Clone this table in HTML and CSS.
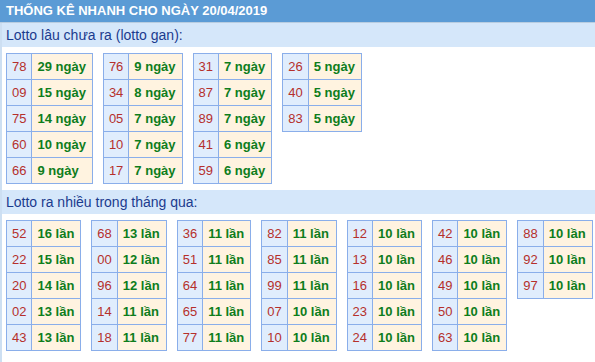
FILE: index.html
```html
<!DOCTYPE html>
<html lang="vi">
<head>
<meta charset="utf-8">
<title>Thống kê nhanh</title>
<link rel="stylesheet" href="styles.css">
</head>
<body>
<div class="header">THỐNG KÊ NHANH CHO NGÀY 20/04/2019</div>
<div class="wrap">
  <div class="subhead">Lotto lâu chưa ra (lotto gan):</div>
  <div class="tables">
    <table class="lt">
      <tr><td class="num">78</td><td class="val">29 ngày</td></tr>
      <tr><td class="num">09</td><td class="val">15 ngày</td></tr>
      <tr><td class="num">75</td><td class="val">14 ngày</td></tr>
      <tr><td class="num">60</td><td class="val">10 ngày</td></tr>
      <tr><td class="num">66</td><td class="val">9 ngày</td></tr>
    </table>
    <table class="lt">
      <tr><td class="num">76</td><td class="val">9 ngày</td></tr>
      <tr><td class="num">34</td><td class="val">8 ngày</td></tr>
      <tr><td class="num">05</td><td class="val">7 ngày</td></tr>
      <tr><td class="num">10</td><td class="val">7 ngày</td></tr>
      <tr><td class="num">17</td><td class="val">7 ngày</td></tr>
    </table>
    <table class="lt">
      <tr><td class="num">31</td><td class="val">7 ngày</td></tr>
      <tr><td class="num">87</td><td class="val">7 ngày</td></tr>
      <tr><td class="num">89</td><td class="val">7 ngày</td></tr>
      <tr><td class="num">41</td><td class="val">6 ngày</td></tr>
      <tr><td class="num">59</td><td class="val">6 ngày</td></tr>
    </table>
    <table class="lt">
      <tr><td class="num">26</td><td class="val">5 ngày</td></tr>
      <tr><td class="num">40</td><td class="val">5 ngày</td></tr>
      <tr><td class="num">83</td><td class="val">5 ngày</td></tr>
    </table>
  </div>
  <div class="subhead">Lotto ra nhiều trong tháng qua:</div>
  <div class="tables">
    <table class="lt">
      <tr><td class="num">52</td><td class="val">16 lần</td></tr>
      <tr><td class="num">22</td><td class="val">15 lần</td></tr>
      <tr><td class="num">20</td><td class="val">14 lần</td></tr>
      <tr><td class="num">02</td><td class="val">13 lần</td></tr>
      <tr><td class="num">43</td><td class="val">13 lần</td></tr>
    </table>
    <table class="lt">
      <tr><td class="num">68</td><td class="val">13 lần</td></tr>
      <tr><td class="num">00</td><td class="val">12 lần</td></tr>
      <tr><td class="num">96</td><td class="val">12 lần</td></tr>
      <tr><td class="num">14</td><td class="val">11 lần</td></tr>
      <tr><td class="num">18</td><td class="val">11 lần</td></tr>
    </table>
    <table class="lt">
      <tr><td class="num">36</td><td class="val">11 lần</td></tr>
      <tr><td class="num">51</td><td class="val">11 lần</td></tr>
      <tr><td class="num">64</td><td class="val">11 lần</td></tr>
      <tr><td class="num">65</td><td class="val">11 lần</td></tr>
      <tr><td class="num">77</td><td class="val">11 lần</td></tr>
    </table>
    <table class="lt">
      <tr><td class="num">82</td><td class="val">11 lần</td></tr>
      <tr><td class="num">85</td><td class="val">11 lần</td></tr>
      <tr><td class="num">99</td><td class="val">11 lần</td></tr>
      <tr><td class="num">07</td><td class="val">10 lần</td></tr>
      <tr><td class="num">10</td><td class="val">10 lần</td></tr>
    </table>
    <table class="lt">
      <tr><td class="num">12</td><td class="val">10 lần</td></tr>
      <tr><td class="num">13</td><td class="val">10 lần</td></tr>
      <tr><td class="num">16</td><td class="val">10 lần</td></tr>
      <tr><td class="num">23</td><td class="val">10 lần</td></tr>
      <tr><td class="num">24</td><td class="val">10 lần</td></tr>
    </table>
    <table class="lt">
      <tr><td class="num">42</td><td class="val">10 lần</td></tr>
      <tr><td class="num">46</td><td class="val">10 lần</td></tr>
      <tr><td class="num">49</td><td class="val">10 lần</td></tr>
      <tr><td class="num">50</td><td class="val">10 lần</td></tr>
      <tr><td class="num">63</td><td class="val">10 lần</td></tr>
    </table>
    <table class="lt">
      <tr><td class="num">88</td><td class="val">10 lần</td></tr>
      <tr><td class="num">92</td><td class="val">10 lần</td></tr>
      <tr><td class="num">97</td><td class="val">10 lần</td></tr>
    </table>
  </div>
</div>
</body>
</html>
```
FILE: styles.css
```css
html, body {
  margin: 0;
  padding: 0;
  background: #ffffff;
  font-family: "Liberation Sans", Arial, sans-serif;
}

.header {
  height: 22px;
  line-height: 22px;
  padding-left: 6px;
  background: #5b9bd5;
  color: #ffffff;
  font-size: 13px;
  font-weight: bold;
  border-bottom: 1px solid #b9cde0;
  white-space: nowrap;
}

.wrap {
  border-left: 2px solid #cddff2;
  min-height: 339px;
}

.subhead {
  height: 24px;
  line-height: 24px;
  padding-left: 4px;
  background: #d5e7fa;
  color: #1b3b8e;
  font-size: 14px;
  white-space: nowrap;
}

.tables {
  display: flex;
  align-items: flex-start;
  gap: 10px;
  padding: 6px 4px;
}

.lt {
  border-collapse: collapse;
  font-size: 13px;
}

.lt td {
  border: 1px solid #8aaeea;
  height: 25px;
  padding: 0 5px;
  white-space: nowrap;
  vertical-align: middle;
}

.lt .num {
  background: #e0edfd;
  color: #b5302c;
}

.lt .val {
  padding-right: 6px;
  background: #fff3e0;
  color: #0e7d1c;
  font-weight: bold;
}
```
